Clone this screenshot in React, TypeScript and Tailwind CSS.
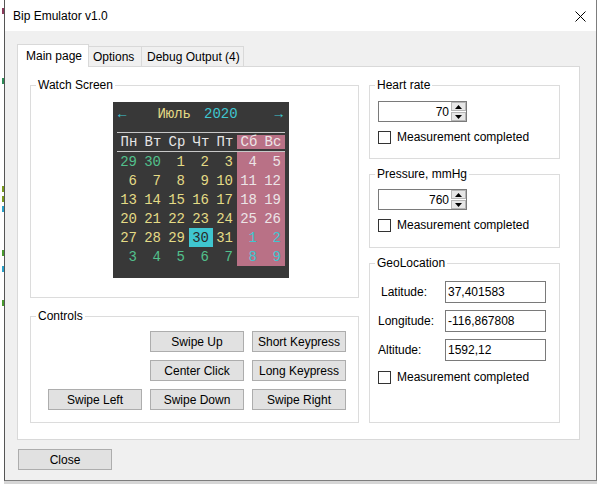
import React from "react";

type Tone = "g" | "y" | "w" | "c" | "h";

const toneClass: Record<Tone, string> = {
  g: "text-[#52c08c]",
  y: "text-[#e4db86]",
  w: "text-[#ece4e6]",
  c: "text-[#3fc6d0]",
  h: "text-[#2a2a2a] bg-[#3fc6d0]",
};

// day, tone
const weeks: [number, Tone][][] = [
  [[29, "g"], [30, "g"], [1, "y"], [2, "y"], [3, "y"], [4, "w"], [5, "w"]],
  [[6, "y"], [7, "y"], [8, "y"], [9, "y"], [10, "y"], [11, "w"], [12, "w"]],
  [[13, "y"], [14, "y"], [15, "y"], [16, "y"], [17, "y"], [18, "w"], [19, "w"]],
  [[20, "y"], [21, "y"], [22, "y"], [23, "y"], [24, "y"], [25, "w"], [26, "w"]],
  [[27, "y"], [28, "y"], [29, "y"], [30, "h"], [31, "y"], [1, "c"], [2, "c"]],
  [[3, "g"], [4, "g"], [5, "g"], [6, "g"], [7, "g"], [8, "c"], [9, "c"]],
];

const dayNames = ["Пн", "Вт", "Ср", "Чт", "Пт", "Сб", "Вс"];

const WatchScreen = () => (
  <div className="ml-[82px] mt-[9px] w-[176px] h-[176px] bg-[#383838] px-[4px] font-['Liberation_Mono',monospace] text-[14px] leading-none">
    <div className="h-[24px] flex items-center justify-between pl-[1px] pr-[2px] text-[#3fc6d0]">
      <span>←</span>
      <div className="flex gap-[13px] mr-[6px]">
        <span className="text-[#e4db86]">Июль</span>
        <span>2020</span>
      </div>
      <span>→</span>
    </div>
    <div className="mt-[6px] h-px bg-[#c8c8c8]" />
    <div className="flex h-[18px] items-center text-[#e6e6e6]">
      {dayNames.map((d, i) => (
        <div
          key={d}
          className={
            i > 4
              ? "w-[24px] h-[14px] flex items-center justify-center bg-[#b97186] text-[#eee6e8]"
              : "w-[24px] h-[14px] flex items-center justify-center"
          }
        >
          {d}
        </div>
      ))}
    </div>
    <div className="h-px bg-[#c8c8c8]" />
    {weeks.map((week, r) => (
      <div key={r} className="flex">
        {week.map(([n, tone], i) => {
          const weekend = i > 4 ? "bg-[#b97186]" : "";
          return (
            <div key={i} className={`w-[24px] h-[19px] flex items-center justify-end ${weekend}`}>
              <span className={`h-[19px] w-[24px] flex items-center justify-end pr-[4px] ${toneClass[tone]}`}>
                {n}
              </span>
            </div>
          );
        })}
      </div>
    ))}
  </div>
);

const Group = ({ title, className, children }: { title: string; className: string; children?: React.ReactNode }) => (
  <fieldset className={`border border-[#dcdcdc] ${className}`}>
    <legend className="ml-[5px] px-[2px] leading-[16px]">{title}</legend>
    {children}
  </fieldset>
);

const Btn = ({ label, className = "" }: { label: string; className?: string }) => (
  <div className={`h-[21px] border border-[#adadad] bg-[#e1e1e1] flex items-center justify-center ${className}`}>
    {label}
  </div>
);

const CheckRow = ({ className }: { className: string }) => (
  <div className={`flex items-center gap-[6px] ml-[8px] ${className}`}>
    <div className="w-[13px] h-[13px] border border-[#333333] bg-white" />
    <span>Measurement completed</span>
  </div>
);

const Spin = ({ value, className }: { value: string; className: string }) => (
  <div className={`ml-[8px] w-[89px] h-[21px] border border-[#7a7a7a] bg-white flex items-center justify-end ${className}`}>
    <span className="mr-[2px]">{value}</span>
    <div className="w-[15px] h-[19px] flex flex-col gap-px">
      <div className="flex-1 border border-[#b5b5b5] bg-[#e6e6e6] flex items-center justify-center">
        <svg width="7" height="4" viewBox="0 0 7 4">
          <path d="M0 4 L3.5 0 L7 4 Z" fill="#000" />
        </svg>
      </div>
      <div className="flex-1 border border-[#b5b5b5] bg-[#e6e6e6] flex items-center justify-center">
        <svg width="7" height="4" viewBox="0 0 7 4">
          <path d="M0 0 L3.5 4 L7 0 Z" fill="#000" />
        </svg>
      </div>
    </div>
  </div>
);

const GeoRow = ({ label, value, pad = "" }: { label: string; value: string; pad?: string }) => (
  <div className="flex items-center ml-[8px]">
    <span className={`w-[67px] ${pad}`}>{label}</span>
    <div className="w-[101px] h-[22px] border border-[#7a7a7a] bg-white flex items-center pl-[2px]">{value}</div>
  </div>
);

// glyph scraps of the window lying behind, drawn as small marks
const scraps: [string, string][] = [
  ["mt-[8px]", "bg-[#8a3b5c]"],
  ["mt-[64px]", "bg-[#2e8b57]"],
  ["mt-[102px]", "bg-[#7a9a1e]"],
  ["mt-[4px]", "bg-[#7a9a1e]"],
  ["mt-[4px]", "bg-[#2aa0c8]"],
  ["mt-[38px]", "bg-[#4a9a2e]"],
  ["mt-[10px]", "bg-[#2aa0c8]"],
  ["mt-[28px]", "bg-[#4a9a2e]"],
];

const App = () => {
  return (
    <div className="w-[599px] h-[484px] bg-white flex overflow-hidden font-['Liberation_Sans',Arial,sans-serif] text-[12px] text-black">
      <div className="w-[4px] flex flex-col items-end">
        {scraps.map(([m, c], i) => (
          <div key={i} className={`w-[2px] h-[6px] ${m} ${c}`} />
        ))}
      </div>

      <div className="flex flex-col">
        <div className="w-[593px] h-[481px] border-l border-r border-b border-l-[#555555] border-r-[#7d7d7d] border-b-[#7d7d7d] flex flex-col">
          <div className="h-[31px] bg-white flex items-center justify-between pl-[8px] pr-[10px]">
            <span className="mt-[1px]">Bip Emulator v1.0</span>
            <svg width="11" height="11" viewBox="0 0 11 11" className="mt-[1px]">
              <path d="M0.5 0.5 L10.5 10.5 M10.5 0.5 L0.5 10.5" stroke="#000" strokeWidth="1" />
            </svg>
          </div>

          <div className="flex-1 bg-[#f0f0f0] pl-[12px] pt-[13px]">
            <div className="flex items-end h-[22px]">
              <div className="relative z-10 w-[72px] h-[23px] -mb-px bg-white border border-b-0 border-[#d9d9d9] flex items-center pl-[8px]">
                Main page
              </div>
              <div className="w-[53px] h-[20px] border-t border-r border-[#d9d9d9] flex items-center pl-[4px]">
                Options
              </div>
              <div className="w-[102px] h-[20px] border-t border-r border-[#d9d9d9] flex items-center pl-[5px]">
                Debug Output (4)
              </div>
            </div>

            <div className="w-[563px] h-[374px] bg-white border border-[#d9d9d9] flex gap-[10px] pl-[12px] pt-[10px]">
              <div className="w-[329px] flex flex-col gap-[10px]">
                <Group title="Watch Screen" className="h-[221px]">
                  <WatchScreen />
                </Group>
                <Group title="Controls" className="h-[115px]">
                  <div className="ml-[17px] mt-[7px] grid grid-cols-[94px_94px_94px] gap-[8px]">
                    <div />
                    <Btn label="Swipe Up" />
                    <Btn label="Short Keypress" />
                    <div />
                    <Btn label="Center Click" />
                    <Btn label="Long Keypress" />
                    <Btn label="Swipe Left" />
                    <Btn label="Swipe Down" />
                    <Btn label="Swipe Right" />
                  </div>
                </Group>
              </div>

              <div className="w-[191px] flex flex-col gap-[7px]">
                <Group title="Heart rate" className="h-[82px]">
                  <Spin value="70" className="mt-[8px]" />
                  <CheckRow className="mt-[6px]" />
                </Group>
                <Group title="Pressure, mmHg" className="h-[82px]">
                  <Spin value="760" className="mt-[7px]" />
                  <CheckRow className="mt-[6px]" />
                </Group>
                <Group title="GeoLocation" className="h-[168px]">
                  <div className="mt-[10px] flex flex-col gap-[7px]">
                    <GeoRow label="Latitude:" value="37,401583" pad="pl-[3px]" />
                    <GeoRow label="Longitude:" value="-116,867808" />
                    <GeoRow label="Altitude:" value="1592,12" />
                  </div>
                  <CheckRow className="mt-[7px]" />
                </Group>
              </div>
            </div>

            <div className="mt-[9px] ml-px w-[94px]">
              <Btn label="Close" />
            </div>
          </div>
        </div>
        <div className="h-[3px] bg-[#d6d6d6]" />
      </div>
      <div className="flex-1 bg-white" />
    </div>
  );
};

export default App;
